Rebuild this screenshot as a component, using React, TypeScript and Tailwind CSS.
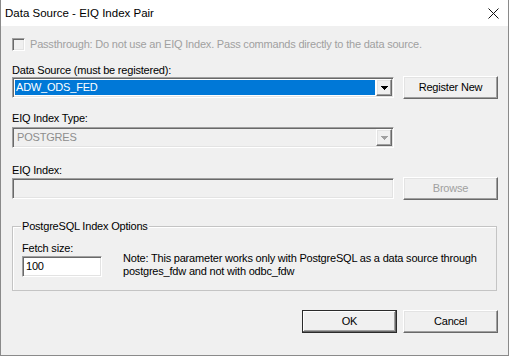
import React from 'react';

const sunken =
  'border border-t-[#a0a0a0] border-l-[#a0a0a0] border-b-white border-r-white shadow-[inset_1px_1px_0_#696969,inset_-1px_-1px_0_#e3e3e3]';
const raised =
  'border border-t-white border-l-white border-b-[#696969] border-r-[#696969] shadow-[inset_-1px_-1px_0_#a0a0a0,inset_1px_1px_0_#e3e3e3]';

function Arrow({ color }: { color: string }) {
  return (
    <svg width="7" height="4" viewBox="0 0 7 4" shapeRendering="crispEdges">
      <rect x="0" y="0" width="7" height="1" fill={color} />
      <rect x="1" y="1" width="5" height="1" fill={color} />
      <rect x="2" y="2" width="3" height="1" fill={color} />
      <rect x="3" y="3" width="1" height="1" fill={color} />
    </svg>
  );
}

function Combo({ value, disabled }: { value: string; disabled?: boolean }) {
  return (
    <div className={`w-[382px] h-[21px] flex p-[1px] ${sunken} ${disabled ? 'bg-[#f0f0f0]' : 'bg-white'}`}>
      <div className="flex-1 p-[1px] flex">
        {disabled ? (
          <div className="flex-1 flex items-center pl-[2px] text-[#8d8d8d]">{value}</div>
        ) : (
          <div className="flex-1 flex items-center pl-[1px] bg-[#0078d7] text-white">{value}</div>
        )}
      </div>
      <div className={`w-[16px] flex items-center justify-center bg-[#f0f0f0] ${raised}`}>
        <Arrow color={disabled ? '#a0a0a0' : '#000000'} />
      </div>
    </div>
  );
}

function Button({ label, disabled, primary }: { label: string; disabled?: boolean; primary?: boolean }) {
  return (
    <div
      className={`w-[95px] h-[23px] flex items-center justify-center bg-[#f0f0f0] ${
        primary
          ? 'border border-[#2b2b2b] shadow-[inset_-1px_-1px_0_#696969,inset_1px_1px_0_#ffffff,inset_-2px_-2px_0_#a0a0a0]'
          : raised
      } ${disabled ? 'text-[#a0a0a0]' : 'text-black'}`}
    >
      {label}
    </div>
  );
}

export default function App() {
  return (
    <div className="w-[509px] h-[356px] flex flex-col bg-[#f0f0f0] border-x border-b border-[#8a8a8a] font-['Liberation_Sans',Arial,sans-serif] text-[11px] leading-[13px] tracking-[-0.2px] text-black">
      {/* Title bar */}
      <div className="h-[26px] bg-white flex items-center justify-between pl-[4px] pr-[9px]">
        <span className="text-[11.5px] tracking-normal pt-[1px]">Data Source - EIQ Index Pair</span>
        <svg width="11" height="11" viewBox="0 0 11 11">
          <path d="M0.5 0.5 L10.5 10.5 M10.5 0.5 L0.5 10.5" stroke="#111" strokeWidth="1" />
        </svg>
      </div>

      <div className="flex flex-col pl-[11px] pr-[10px]">
        {/* Passthrough */}
        <div className="mt-[12px] h-[13px] flex items-center">
          <div className={`w-[13px] h-[13px] bg-[#f0f0f0] ${sunken}`} />
          <span className="ml-[5px] text-[#a0a0a0]">
            Passthrough: Do not use an EIQ Index. Pass commands directly to the data source.
          </span>
        </div>

        <div className="mt-[13px] h-[12px]">Data Source (must be registered):</div>
        <div className="h-[23px] flex items-center justify-between">
          <Combo value="ADW_ODS_FED" />
          <Button label="Register New" />
        </div>

        <div className="mt-[13px] h-[15px]">EIQ Index Type:</div>
        <Combo value="POSTGRES" disabled />

        <div className="mt-[16px] h-[13px]">EIQ Index:</div>
        <div className="h-[23px] flex items-center justify-between">
          <div className={`w-[382px] h-[21px] bg-[#f0f0f0] ${sunken}`} />
          <Button label="Browse" disabled />
        </div>

        {/* Group box */}
        <div className="relative mt-[26px] mr-[1px] h-[65px] border border-[#c4c4c4] shadow-[inset_1px_1px_0_#ffffff] pl-[9px] pt-[15px] flex">
          <span className="absolute top-[-7px] left-[8px] px-[1px] bg-[#f0f0f0]">PostgreSQL Index Options</span>
          <div className="flex flex-col">
            <div className="h-[14px]">Fetch size:</div>
            <div className={`w-[80px] h-[21px] bg-white flex items-center pl-[3px] ${sunken}`}>100</div>
          </div>
          <div className="ml-[21px] mt-[10px] whitespace-nowrap">
            Note: This parameter works only with PostgreSQL as a data source through
            <br />
            postgres_fdw and not with odbc_fdw
          </div>
        </div>

        <div className="mt-[19px] flex justify-end gap-[6px]">
          <Button label="OK" primary />
          <Button label="Cancel" />
        </div>
      </div>
    </div>
  );
}
